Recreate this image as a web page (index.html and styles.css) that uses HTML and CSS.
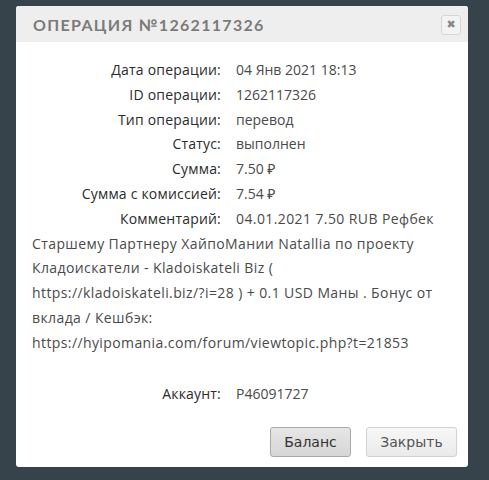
FILE: index.html
```html
<!DOCTYPE html>
<html lang="ru">
<head>
<meta charset="utf-8">
<link rel="stylesheet" href="styles.css">
</head>
<body>
<div class="modal">
  <div class="modal-header">
    <h3 class="title">Операция №1262117326</h3>
    <button class="close" aria-label="close">&#10006;</button>
  </div>
  <div class="modal-body">
    <div class="row"><span class="label">Дата операции:</span><span class="value">04 Янв 2021 18:13</span></div>
    <div class="row"><span class="label">ID операции:</span><span class="value">1262117326</span></div>
    <div class="row"><span class="label">Тип операции:</span><span class="value">перевод</span></div>
    <div class="row"><span class="label">Статус:</span><span class="value">выполнен</span></div>
    <div class="row"><span class="label">Сумма:</span><span class="value">7.50 ₽</span></div>
    <div class="row"><span class="label">Сумма с комиссией:</span><span class="value">7.54 ₽</span></div>
    <div class="row comment"><span class="label">Комментарий:</span>04.01.2021 7.50 RUB Рефбек Старшему Партнеру ХайпоМании Natallia по проекту Кладоискатели - Kladoiskateli Biz ( https://kladoiskateli.biz/?&#8288;i=28 ) + 0.1 USD Маны . Бонус от вклада / Кешбэк: https://hyipomania.com/forum/viewtopic.php?&#8288;t=21853</div>
    <div class="row account"><span class="label">Аккаунт:</span><span class="value">P46091727</span></div>
  </div>
  <div class="modal-footer">
    <button class="btn btn-dark">Баланс</button>
    <button class="btn btn-light">Закрыть</button>
  </div>
</div>
</body>
</html>
```
FILE: styles.css
```css
html, body {
  margin: 0;
  padding: 0;
  background: #36434b;
  height: 480px;
  overflow: hidden;
}
body {
  padding: 6px 21px 0 16px;
  font-family: "Open Sans", "Noto Sans", sans-serif;
}
.modal {
  width: 452px;
  height: 461px;
  background: #fff;
  border-radius: 3px;
  display: flex;
  flex-direction: column;
  overflow: hidden;
}
.modal-header {
  height: 36px;
  background: #eeeeee;
  display: flex;
  align-items: center;
  justify-content: space-between;
  padding: 0 7px 0 17px;
  flex: none;
}
.title {
  margin: 0;
  font-family: "Lato", sans-serif;
  font-weight: 700;
  font-size: 16px;
  letter-spacing: 1.3px;
  text-transform: uppercase;
  color: #7b7b7b;
}
.close {
  width: 20px;
  height: 20px;
  padding: 0;
  border: 1px solid #d6d6d6;
  border-radius: 3px;
  background: #f3f3f3;
  color: #888;
  font-size: 11px;
  line-height: 18px;
  font-family: "DejaVu Sans", sans-serif;
  margin-top: 2px;
}
.modal-body {
  padding: 16px 16px 0 16px;
  font-size: 14px;
  line-height: 24.8px;
  color: #444;
  flex: 1;
}
.row {
  margin: 0;
  color: #4a4a4a;
}
.label {
  display: inline-block;
  width: 189px;
  text-align: right;
  margin-right: 15px;
  font-weight: 500;
  letter-spacing: 0.2px;
  color: #2b2b2b;
}
.value {
  color: #4a4a4a;
}
.comment {
  letter-spacing: 0.4px;
}
.comment .label {
  letter-spacing: 0.2px;
}
.account {
  margin-top: 26px;
}
.modal-footer {
  display: flex;
  justify-content: flex-end;
  gap: 15px;
  padding: 0 11px 10px 0;
  flex: none;
}
.btn {
  height: 30px;
  padding: 0;
  font-family: "DejaVu Sans", Verdana, sans-serif;
  font-size: 14px;
  border-radius: 3px;
}
.btn-dark {
  width: 81px;
  color: #333;
  border: 1px solid #a9a9a9;
  background: linear-gradient(#e6e6e6, #d6d6d6);
}
.btn-light {
  width: 91px;
  color: #555;
  border: 1px solid #d2d2d2;
  background: linear-gradient(#f7f7f7, #eaeaea);
}
```
